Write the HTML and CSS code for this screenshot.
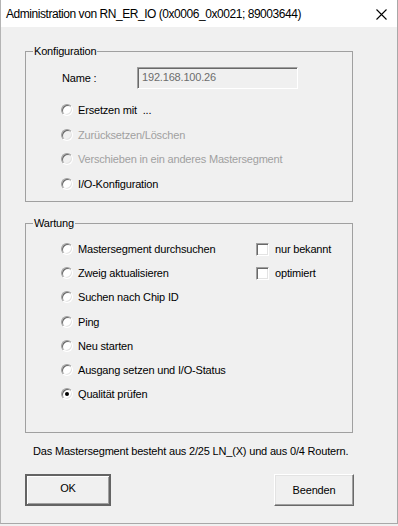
FILE: index.html
```html
<!DOCTYPE html>
<html lang="de">
<head>
    <meta charset="UTF-8">
    <title>Administration</title>
    <link rel="stylesheet" href="styles.css">
</head>
<body>
    <div class="window">
        <div class="titlebar">
            <span class="title">Administration von RN_ER_IO (0x0006_0x0021; 89003644)</span>
            <svg class="close" width="11" height="11" viewBox="0 0 11 11">
                <path d="M0.5 0.5 L10.5 10.5 M10.5 0.5 L0.5 10.5" stroke="#000" stroke-width="1.1" fill="none"/>
            </svg>
        </div>

        <div class="content">
            <div class="group group-config">
                <span class="legend">Konfiguration</span>
                <div class="name-row">
                    <span class="name-label">Name :</span>
                    <div class="textbox">192.168.100.26</div>
                </div>
                <div class="option"><span class="radio"></span>Ersetzen mit &nbsp;...</div>
                <div class="option disabled"><span class="radio"></span>Zurücksetzen/Löschen</div>
                <div class="option disabled"><span class="radio"></span>Verschieben in ein anderes Mastersegment</div>
                <div class="option"><span class="radio"></span>I/O-Konfiguration</div>
            </div>

            <div class="group group-service">
                <span class="legend">Wartung</span>
                <div class="service-grid">
                    <div class="option col1"><span class="radio"></span>Mastersegment durchsuchen</div>
                    <div class="option"><span class="check"></span>nur bekannt</div>
                    <div class="option col1"><span class="radio"></span>Zweig aktualisieren</div>
                    <div class="option"><span class="check"></span>optimiert</div>
                    <div class="option col1"><span class="radio"></span>Suchen nach Chip ID</div>
                    <div class="option col1"><span class="radio"></span>Ping</div>
                    <div class="option col1"><span class="radio"></span>Neu starten</div>
                    <div class="option col1"><span class="radio"></span>Ausgang setzen und I/O-Status</div>
                    <div class="option col1"><span class="radio checked"></span>Qualität prüfen</div>
                </div>
            </div>

            <p class="status">Das Mastersegment besteht aus 2/25 LN_(X) und aus 0/4 Routern.</p>

            <div class="buttons">
                <button class="btn btn-default">OK</button>
                <button class="btn">Beenden</button>
            </div>
        </div>
    </div>
</body>
</html>
```

FILE: styles.css
```css
body {
    margin: 0;
    padding: 0;
    background-color: #f0f0f0;
    font-family: "Liberation Sans", Arial, sans-serif;
    font-size: 11px;
    letter-spacing: -0.18px;
    color: #000;
}
.window {
    width: 398px;
    height: 524px;
    box-sizing: border-box;
    background-color: #f0f0f0;
    border-left: 1px solid #b4b4b4;
    border-right: 1px solid #a8a8a8;
    border-bottom: 1px solid #a8a8a8;
}
.titlebar {
    height: 27px;
    background-color: #fff;
    display: flex;
    align-items: center;
    justify-content: space-between;
    padding: 0 10px 0 5px;
}
.title {
    font-size: 12px;
    letter-spacing: -0.45px;
    padding-top: 1px;
}
.close {
    display: block;
    margin-top: 1px;
}

.content {
    padding: 24px 0 0 24px;
}
.group {
    position: relative;
    width: 328px;
    box-sizing: border-box;
    border: 1px solid #a0a0a0;
}
.legend {
    position: absolute;
    top: -8px;
    left: 7px;
    padding: 0 1px;
    background-color: #f0f0f0;
    line-height: 14px;
}
.group-config {
    height: 151px;
    padding: 15px 0 0 35px;
}
.group-service {
    height: 210px;
    margin-top: 21px;
    padding: 13px 0 0 35px;
}

.name-row {
    display: flex;
    align-items: center;
    height: 22px;
    margin-bottom: 9px;
}
.name-label {
    width: 75px;
    padding-left: 1px;
}
.textbox {
    width: 161px;
    height: 22px;
    box-sizing: border-box;
    border: 1px solid;
    border-color: #a0a0a0 #fff #fff #a0a0a0;
    box-shadow: inset 1px 1px 0 #696969;
    color: #6d6d6d;
    padding: 3px 0 0 4px;
}

.option {
    display: flex;
    align-items: center;
    height: 24.5px;
    white-space: nowrap;
}
.option.disabled {
    color: #a0a0a0;
}
.radio {
    width: 12px;
    height: 12px;
    box-sizing: border-box;
    border-radius: 50%;
    border: 1px solid;
    border-color: #a0a0a0 #fff #fff #a0a0a0;
    box-shadow: inset 1px 1px 0 #696969, inset -1px -1px 0 #e3e3e3;
    background-color: #fff;
    margin-right: 5px;
    position: relative;
}
.disabled .radio {
    background-color: #f0f0f0;
}
.radio.checked::after {
    content: "";
    position: absolute;
    left: 3px;
    top: 3px;
    width: 4px;
    height: 4px;
    border-radius: 50%;
    background-color: #000;
}
.check {
    width: 13px;
    height: 13px;
    box-sizing: border-box;
    border: 1px solid;
    border-color: #a0a0a0 #fff #fff #a0a0a0;
    box-shadow: inset 1px 1px 0 #696969, inset -1px -1px 0 #e3e3e3;
    background-color: #fff;
    margin-right: 6px;
}

.service-grid {
    display: grid;
    grid-template-columns: 195px 1fr;
    grid-auto-rows: 24.2px;
}
.service-grid .option {
    height: auto;
}
.col1 {
    grid-column: 1;
}

.status {
    margin: 11px 0 0 8px;
    line-height: 14px;
}
.buttons {
    display: flex;
    justify-content: space-between;
    width: 329px;
    margin-top: 16px;
}
.btn {
    font-family: "Liberation Sans", Arial, sans-serif;
    font-size: 11px;
    letter-spacing: -0.18px;
    height: 32px;
    width: 80px;
    background-color: #f0f0f0;
    border: 1px solid;
    border-color: #fff #696969 #696969 #fff;
    box-shadow: inset -1px -1px 0 #a0a0a0, inset 1px 1px 0 #e3e3e3;
    padding: 0;
    color: #000;
}
.btn-default {
    width: 86px;
    outline: 1px solid #646464;
    outline-offset: -1px;
    border-width: 2px;
    border-color: #646464;
    box-shadow: inset 1px 1px 0 #fff, inset -1px -1px 0 #a0a0a0;
    padding-bottom: 4px;
}
```
